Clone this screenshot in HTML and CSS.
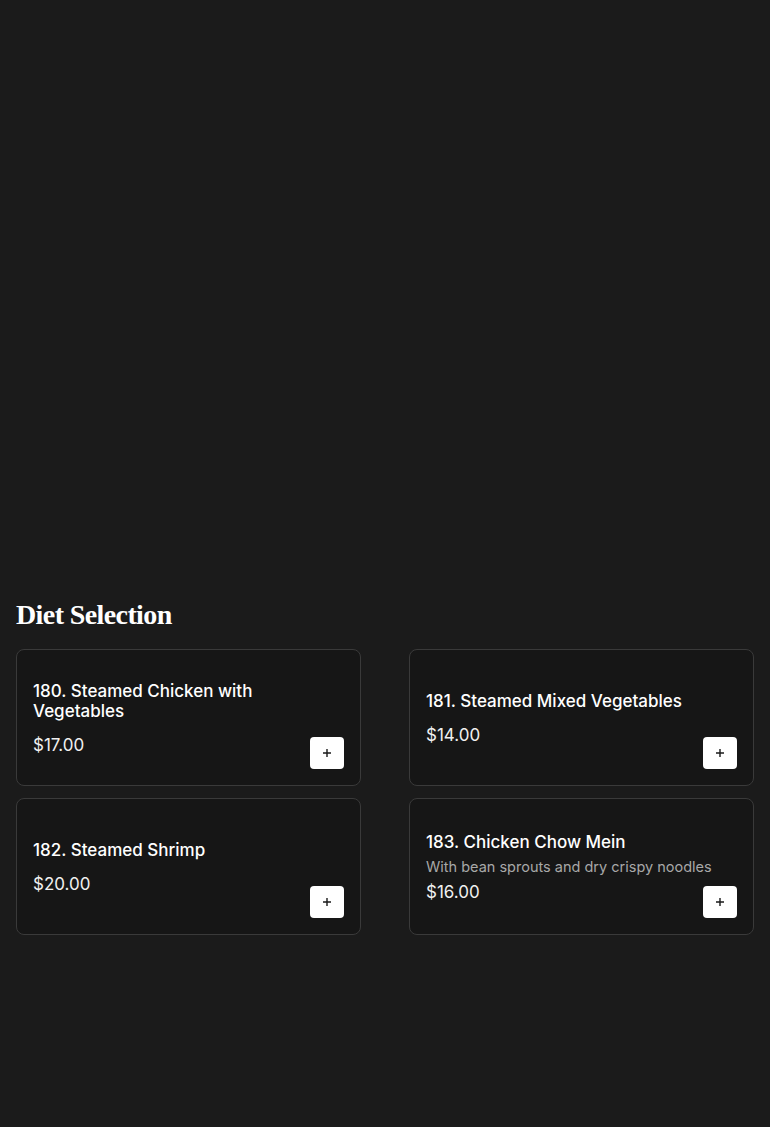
FILE: index.html
```html
<!DOCTYPE html>
<html lang="en">
<head>
<meta charset="utf-8">
<title>Diet Selection</title>
<link rel="stylesheet" href="styles.css">
</head>
<body>
<div class="hero"></div>
<section class="section">
  <h2 class="section-title">Diet Selection</h2>
  <div class="grid">
    <div class="card">
      <div class="info">
        <div class="name">180. Steamed Chicken with Vegetables</div>
        <div class="price">$17.00</div>
      </div>
      <button class="add" aria-label="Add"><svg viewBox="0 0 10 10" width="10" height="10"><path d="M5 1v8M1 5h8" stroke="#1a1a1a" stroke-width="1.4"/></svg></button>
    </div>
    <div class="card">
      <div class="info">
        <div class="name">181. Steamed Mixed Vegetables</div>
        <div class="price">$14.00</div>
      </div>
      <button class="add" aria-label="Add"><svg viewBox="0 0 10 10" width="10" height="10"><path d="M5 1v8M1 5h8" stroke="#1a1a1a" stroke-width="1.4"/></svg></button>
    </div>
    <div class="card">
      <div class="info">
        <div class="name">182. Steamed Shrimp</div>
        <div class="price">$20.00</div>
      </div>
      <button class="add" aria-label="Add"><svg viewBox="0 0 10 10" width="10" height="10"><path d="M5 1v8M1 5h8" stroke="#1a1a1a" stroke-width="1.4"/></svg></button>
    </div>
    <div class="card">
      <div class="info">
        <div class="name">183. Chicken Chow Mein</div>
        <div class="desc">With bean sprouts and dry crispy noodles</div>
        <div class="price">$16.00</div>
      </div>
      <button class="add" aria-label="Add"><svg viewBox="0 0 10 10" width="10" height="10"><path d="M5 1v8M1 5h8" stroke="#1a1a1a" stroke-width="1.4"/></svg></button>
    </div>
  </div>
</section>
</body>
</html>
```
FILE: styles.css
```css
html, body {
  margin: 0;
  padding: 0;
  background: #1b1b1b;
  color: #ffffff;
  font-family: Inter, "Open Sans", sans-serif;
}
.hero {
  height: 598px;
}
.section {
  padding: 0 16px;
}
.section-title {
  margin: 0 0 17px;
  font-family: "Liberation Serif", "DejaVu Serif", serif;
  font-weight: 700;
  font-size: 28px;
  line-height: 34px;
  letter-spacing: -0.6px;
  color: #ffffff;
}
.grid {
  display: grid;
  grid-template-columns: 1fr 1fr;
  column-gap: 48px;
  row-gap: 12px;
}
.card {
  position: relative;
  display: flex;
  align-items: center;
  min-height: 137px;
  box-sizing: border-box;
  padding: 16px 31px 16px 16px;
  background: #161616;
  border: 1px solid #3a3a3a;
  border-radius: 8px;
}
.info {
  flex: 1;
  display: flex;
  flex-direction: column;
}
.name {
  font-size: 17px;
  line-height: 20px;
  font-weight: 500;
}
.desc {
  margin-top: 6px;
  font-size: 14.5px;
  line-height: 18px;
  color: #a8a8a8;
  font-weight: 400;
  white-space: nowrap;
}
.price {
  margin-top: 14px;
  font-size: 17px;
  line-height: 20px;
  font-weight: 400;
  color: #f0f0f0;
}
.desc + .price {
  margin-top: 6px;
}
.add {
  position: absolute;
  right: 16px;
  bottom: 16px;
  width: 34px;
  height: 32px;
  padding: 0;
  border: none;
  border-radius: 4px;
  background: #ffffff;
  display: flex;
  align-items: center;
  justify-content: center;
  cursor: pointer;
}
```
